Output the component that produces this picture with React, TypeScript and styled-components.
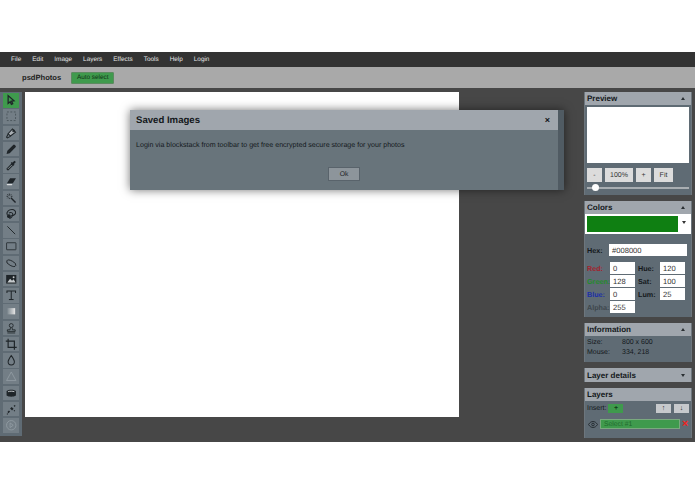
import React from 'react';
import styled, { createGlobalStyle } from 'styled-components';

const Global = createGlobalStyle`
	html, body {
		margin: 0;
		padding: 0;
		background: #fff;
		font-family: 'Liberation Sans', Arial, sans-serif;
		text-rendering: geometricPrecision;
	}
`;

const Page = styled.div`
	width: 695px;
	height: 494px;
	padding-top: 52px;
	box-sizing: border-box;
	position: relative;
	overflow: hidden;
`;

const MenuBar = styled.nav`
	height: 15px;
	background: #333333;
	display: flex;
	align-items: center;
	padding-left: 11px;
	gap: 11px;
	font-size: 6.4px;
	color: #e4e4e4;
`;

const Header = styled.header`
	height: 21px;
	background: #a9a9a9;
	display: flex;
	align-items: center;
	padding-left: 22px;
`;

const Brand = styled.div`
	font-size: 7.6px;
	font-weight: bold;
	color: #1e1e1e;
	margin-right: 10px;
`;

const AutoSelect = styled.div`
	width: 43px;
	height: 12px;
	background: #3f9a4d;
	border: 1px solid #5c8a60;
	box-sizing: border-box;
	border-radius: 1px;
	font-size: 6.4px;
	color: #0f3315;
	display: flex;
	align-items: center;
	justify-content: center;
`;

const Workspace = styled.main`
	height: 354px;
	background: #474747;
	display: flex;
	align-items: flex-start;
	padding-top: 4px;
	box-sizing: border-box;
`;

const Toolbar = styled.aside`
	width: 22px;
	height: 344px;
	background: #5f6b74;
	display: flex;
	flex-direction: column;
	align-items: center;
	padding-top: 1px;
	box-sizing: border-box;
	gap: 1.75px;
`;

const Tool = styled.div<{ $active?: boolean; $dim?: boolean }>`
	width: 16px;
	height: 14.5px;
	background: ${(p) => (p.$active ? '#3f9a4d' : '#737e86')};
	display: flex;
	align-items: center;
	justify-content: center;
	color: ${(p) => (p.$dim ? '#929ca3' : '#1f2529')};
	svg {
		width: 12.5px;
		height: 12.5px;
		display: block;
	}
`;

const HiddenDefs = styled.svg`
	position: absolute;
	width: 0;
	height: 0;
`;

const Canvas = styled.div`
	width: 434px;
	height: 325px;
	margin-left: 3px;
	background: #fff;
	flex: none;
`;

const Side = styled.div`
	width: 108px;
	margin-left: 125px;
	flex: none;
	display: flex;
	flex-direction: column;
	gap: 6px;
`;

const Panel = styled.section`
	background: #5f6b74;
	border-left: 1px solid #6d767d;
	border-right: 1px solid #6d767d;
	box-sizing: border-box;
`;

const PanelTitle = styled.div<{ $tall?: boolean }>`
	height: ${(p) => (p.$tall ? 14 : 13)}px;
	background: #a0a6ad;
	display: flex;
	align-items: center;
	justify-content: space-between;
	padding: 0 3px 0 2px;
	font-size: 8px;
	font-weight: bold;
	color: #14181b;
`;

const Caret = styled.span<{ $down?: boolean }>`
	width: 0;
	height: 0;
	margin-right: 3px;
	border-left: 2.5px solid transparent;
	border-right: 2.5px solid transparent;
	${(p) => (p.$down ? 'border-top: 3px solid #2a2f33;' : 'border-bottom: 3px solid #2a2f33;')}
`;

const PreviewBox = styled.div`
	height: 56px;
	margin: 2px 2px 0;
	background: #fff;
`;

const ZoomRow = styled.div`
	display: flex;
	gap: 3px;
	padding: 5px 2px 0;
`;

const ZoomBtn = styled.div<{ $w: number }>`
	width: ${(p) => p.$w}px;
	height: 14px;
	background: #dcdcdc;
	font-size: 7px;
	color: #333;
	display: flex;
	align-items: center;
	justify-content: center;
`;

const Slider = styled.div`
	height: 2px;
	margin: 5px 2px 6px;
	background: #a9aeb2;
	position: relative;
`;

const Knob = styled.span`
	position: absolute;
	left: 5px;
	top: -3px;
	width: 7px;
	height: 7px;
	border-radius: 50%;
	background: #fff;
`;

const SwatchRow = styled.div`
	height: 20px;
	background: #fff;
	display: flex;
	align-items: center;
	padding-left: 2px;
`;

const Swatch = styled.div`
	width: 91px;
	height: 16px;
	background: #0f7f12;
`;

const SwatchArrow = styled.span`
	width: 0;
	height: 0;
	margin: -3px 0 0 4px;
	border-left: 2.5px solid transparent;
	border-right: 2.5px solid transparent;
	border-top: 3.5px solid #333;
`;

const HexRow = styled.div`
	display: flex;
	align-items: center;
	padding: 10px 0 0 2px;
	margin-bottom: 6px;
`;

const ColorGrid = styled.div`
	display: grid;
	grid-template-columns: 23px 25px 25px 25px;
	grid-auto-rows: 12px;
	row-gap: 1px;
	padding: 0 0 4px 2px;
	align-items: center;
`;

const Label = styled.span<{ $color?: string }>`
	font-size: 7.2px;
	font-weight: bold;
	color: ${(p) => p.$color || '#14181b'};
	white-space: nowrap;
`;

const HexLabel = styled(Label)`
	width: 22px;
`;

const HueLabel = styled(Label)`
	margin-left: 3px;
`;

const Field = styled.div<{ $w?: number }>`
	width: ${(p) => (p.$w ? `${p.$w}px` : '100%')};
	height: 12px;
	background: #fff;
	font-size: 7.6px;
	color: #333;
	padding-left: 3px;
	box-sizing: border-box;
	display: flex;
	align-items: center;
`;

const InfoBody = styled.div`
	display: grid;
	grid-template-columns: 35px 1fr;
	padding: 2px 2px 4px;
	font-size: 7px;
	line-height: 10px;
	color: #14191c;
`;

const InsertRow = styled.div`
	display: flex;
	align-items: center;
	padding: 3px 2px 0 2px;
	font-size: 7px;
	color: #14191c;
`;

const InsertBtn = styled.div`
	width: 15px;
	height: 9px;
	margin-left: 2px;
	background: #3f9a4d;
	font-size: 7px;
	font-weight: bold;
	color: #123a18;
	display: flex;
	align-items: center;
	justify-content: center;
`;

const ArrowBtn = styled.div`
	width: 15px;
	height: 9px;
	margin-left: 3px;
	background: #c6c9cc;
	font-size: 7px;
	color: #222;
	display: flex;
	align-items: center;
	justify-content: center;
`;

const Spacer = styled.div`
	flex: 1;
`;

const LayerRow = styled.div`
	display: flex;
	align-items: center;
	padding: 6px 0 9px 3px;
`;

const LayerName = styled.div`
	width: 80px;
	height: 10px;
	margin-left: 2px;
	background: #3f9a4d;
	border: 1px solid #7aa97f;
	box-sizing: border-box;
	font-size: 6.8px;
	color: #1f6a2e;
	padding-left: 3px;
	display: flex;
	align-items: center;
`;

const RemoveMark = styled.span`
	margin-left: 2px;
	font-size: 11px;
	font-weight: bold;
	color: #f02424;
	line-height: 8px;
`;

const Dialog = styled.div`
	position: absolute;
	left: 130px;
	top: 110px;
	width: 434px;
	height: 80px;
	background: #68747b;
	border-right: 6px solid #505b63;
	box-sizing: border-box;
	box-shadow: 0 0 9px rgba(0, 0, 0, 0.55);
`;

const DialogHead = styled.div`
	height: 20px;
	background: #a0a6ad;
	display: flex;
	align-items: center;
	justify-content: space-between;
	padding: 0 8px 0 6px;
	font-size: 9.6px;
	font-weight: bold;
	color: #14181b;
`;

const CloseX = styled.span`
	font-size: 9px;
	color: #14181b;
`;

const DialogText = styled.p`
	margin: 11px 0 0 6px;
	font-size: 7.1px;
	color: #14191c;
`;

const OkBtn = styled.div`
	position: absolute;
	left: 198px;
	top: 57px;
	width: 32px;
	height: 14px;
	background: #8d959b;
	border: 1px solid #59636b;
	box-sizing: border-box;
	font-size: 6.8px;
	color: #1c2226;
	display: flex;
	align-items: center;
	justify-content: center;
`;

const icons: { active?: boolean; dim?: boolean; el: React.ReactNode }[] = [
	{ active: true, el: <path d="M4 2v10l2.6-2.2 1.6 3.4 1.7-.8-1.6-3.3 3.2-.3z" fill="none" stroke="currentColor" strokeWidth="1.6" /> },
	{ el: <rect x="2.5" y="2.5" width="11" height="11" fill="none" stroke="#4b555c" strokeWidth="1.2" strokeDasharray="2.4 2" /> },
	{ el: <g fill="none" stroke="currentColor" strokeWidth="1.3"><path d="M9.5 2.5l4 4-6.5 5-3-3z" fill="#aab0b5" /><path d="M4 9l-2 4 1 1 4-2" /><circle cx="11" cy="5" r="1" /></g> },
	{ el: <path d="M2 14l1-4 7.5-7.5a1.4 1.4 0 012 0l1 1a1.4 1.4 0 010 2L6 13z" fill="currentColor" /> },
	{ el: <g fill="none" stroke="currentColor" strokeWidth="1.3"><path d="M3 13.5l-.5-1 6-6 1.5 1.5-6 6z" fill="#8b949a" /><path d="M8 4.5l3.5 3.5" strokeWidth="2" /><path d="M10 6l3-3" strokeWidth="2.6" /></g> },
	{ el: <g><path d="M6.5 4H14L10 10.5H2.5z" fill="currentColor" /><path d="M2 11.5h7.5l-.8 1.5H2.8z" fill="#d9dcde" /></g> },
	{ el: <g stroke="currentColor" fill="none"><path d="M7.5 7.5L13.5 13.5" strokeWidth="1.8" /><path d="M5.5 2v2.5M5.5 7.5V9M2 5.5h2M7.5 5.5h2M3 3l1.2 1.2M8 3L6.8 4.2M3 8l1.2-1.2" strokeWidth="1.1" /></g> },
	{ el: <g fill="none" stroke="currentColor" strokeWidth="1.3"><path d="M3 9c-2-4 2-7 6-7 3 0 5 2 4.5 4.5-.4 2-3 3.5-5.500 3" /><path d="M5 6.500c2-1.500 5-.5 5 1.500s-2 5-4.500 5.500" /><circle cx="5" cy="10.500" r="1.800" fill="currentColor" /></g> },
	{ el: <path d="M3 3l10 10" stroke="currentColor" strokeWidth="1.2" /> },
	{ el: <rect x="2" y="3.5" width="12" height="9" rx="0.5" fill="none" stroke="currentColor" strokeWidth="1" /> },
	{ el: <ellipse cx="8" cy="8" rx="6.5" ry="3" transform="rotate(28 8 8)" fill="none" stroke="currentColor" strokeWidth="1.1" /> },
	{ el: <g><rect x="1.5" y="2.5" width="13" height="11" fill="currentColor" /><path d="M3 12l3.5-4.500L9 10l2-2 2.500 4z" fill="#c5c9cc" /><circle cx="11" cy="5.5" r="1.2" fill="#c5c9cc" /></g> },
	{ el: <g fill="none" stroke="currentColor"><path d="M2.5 5V2.5h11V5M8 2.5v11" strokeWidth="1.3" /><path d="M5 13.5h6" strokeWidth="1.3" /></g> },
	{ dim: true, el: <rect x="3" y="4" width="10" height="8" fill="url(#grad)" /> },
	{ el: <g fill="none" stroke="currentColor" strokeWidth="1.1"><circle cx="8" cy="4.5" r="2.5" /><path d="M7 7l-.5 3H3v2h10v-2H9.5L9 7" /><path d="M3 14h10" /></g> },
	{ el: <g fill="none" stroke="currentColor" strokeWidth="1.5"><path d="M4 1v11h11" /><path d="M1 4h11v11" /></g> },
	{ el: <path d="M8 2c2.5 3.5 4 5.5 4 8a4 4 0 01-8 0c0-2.500 1.500-4.500 4-8z" fill="none" stroke="currentColor" strokeWidth="1.3" /> },
	{ dim: true, el: <path d="M8 2.5L14 13.5H2z" fill="none" stroke="currentColor" strokeWidth="1.1" /> },
	{ el: <g><path d="M2 5c3-2 9-2 12 0v6c-3 2-9 2-12 0z" fill="currentColor" /><path d="M4 6c2-.8 6-.8 8 0" stroke="#c9cdd0" strokeWidth="1.2" fill="none" /></g> },
	{ el: <g fill="currentColor"><path d="M3 11.5l2-2 1.5 1.500-2 2z" /><path d="M6.5 7l2-2 2.500 2.500-2 2z" /><path d="M11 3.5l1.5-1 1 1-1 1.500z" /><path d="M2 14l1-1 1 1-1 1z" /><path d="M12 9l1 1-1 1-1-1z" /></g> },
	{ dim: true, el: <g fill="none" stroke="currentColor" strokeWidth="1.1"><circle cx="8" cy="8" r="6" /><path d="M6.5 5l4 3-4 3z" /></g> },
];

const menu = ['File', 'Edit', 'Image', 'Layers', 'Effects', 'Tools', 'Help', 'Login'];

export default function App() {
	return (
		<Page>
			<Global />
			<MenuBar>
				{menu.map((m) => (
					<span key={m}>{m}</span>
				))}
			</MenuBar>
			<Header>
				<Brand>psdPhotos</Brand>
				<AutoSelect>Auto select</AutoSelect>
			</Header>
			<Workspace>
				<HiddenDefs>
					<defs>
						<linearGradient id="grad">
							<stop offset="0" stopColor="#7f8a91" />
							<stop offset="1" stopColor="#e6e6e6" />
						</linearGradient>
					</defs>
				</HiddenDefs>
				<Toolbar>
					{icons.map((t, i) => (
						<Tool key={i} $active={t.active} $dim={t.dim}>
							<svg viewBox="0 0 16 16">{t.el}</svg>
						</Tool>
					))}
				</Toolbar>
				<Canvas />
				<Side>
					<Panel>
						<PanelTitle>Preview<Caret /></PanelTitle>
						<PreviewBox />
						<ZoomRow>
							<ZoomBtn $w={15}>-</ZoomBtn>
							<ZoomBtn $w={28}>100%</ZoomBtn>
							<ZoomBtn $w={15}>+</ZoomBtn>
							<ZoomBtn $w={19}>Fit</ZoomBtn>
						</ZoomRow>
						<Slider><Knob /></Slider>
					</Panel>
					<Panel>
						<PanelTitle>Colors<Caret /></PanelTitle>
						<SwatchRow><Swatch /><SwatchArrow /></SwatchRow>
						<HexRow>
							<HexLabel>Hex:</HexLabel>
							<Field $w={78}>#008000</Field>
						</HexRow>
						<ColorGrid>
							<Label $color="#a3222c">Red:</Label><Field>0</Field><HueLabel>Hue:</HueLabel><Field>120</Field>
							<Label $color="#1f8a2a">Green:</Label><Field>128</Field><HueLabel>Sat:</HueLabel><Field>100</Field>
							<Label $color="#1b2fa8">Blue:</Label><Field>0</Field><HueLabel>Lum:</HueLabel><Field>25</Field>
							<Label $color="#3e474d">Alpha:</Label><Field>255</Field>
						</ColorGrid>
					</Panel>
					<Panel>
						<PanelTitle>Information<Caret /></PanelTitle>
						<InfoBody>
							<span>Size:</span><span>800 x 600</span>
							<span>Mouse:</span><span>334, 218</span>
						</InfoBody>
					</Panel>
					<Panel>
						<PanelTitle $tall>Layer details<Caret $down /></PanelTitle>
					</Panel>
					<Panel>
						<PanelTitle>Layers</PanelTitle>
						<InsertRow>
							Insert:<InsertBtn>+</InsertBtn>
							<Spacer />
							<ArrowBtn>↑</ArrowBtn>
							<ArrowBtn>↓</ArrowBtn>
						</InsertRow>
						<LayerRow>
							<svg width="10" height="7" viewBox="0 0 10 7">
								<path d="M.5 3.5C2 1.200 3.500.5 5 .5s3 .7 4.500 3C8 5.800 6.500 6.500 5 6.500S2 5.800.5 3.500z" fill="none" stroke="#1c2226" strokeWidth=".8" />
								<circle cx="5" cy="3.5" r="1.3" fill="none" stroke="#1c2226" strokeWidth=".8" />
							</svg>
							<LayerName>Select #1</LayerName>
							<RemoveMark>×</RemoveMark>
						</LayerRow>
					</Panel>
				</Side>
			</Workspace>
			<Dialog>
				<DialogHead>Saved Images<CloseX>×</CloseX></DialogHead>
				<DialogText>Login via blockstack from toolbar to get free encrypted secure storage for your photos</DialogText>
				<OkBtn>Ok</OkBtn>
			</Dialog>
		</Page>
	);
}
